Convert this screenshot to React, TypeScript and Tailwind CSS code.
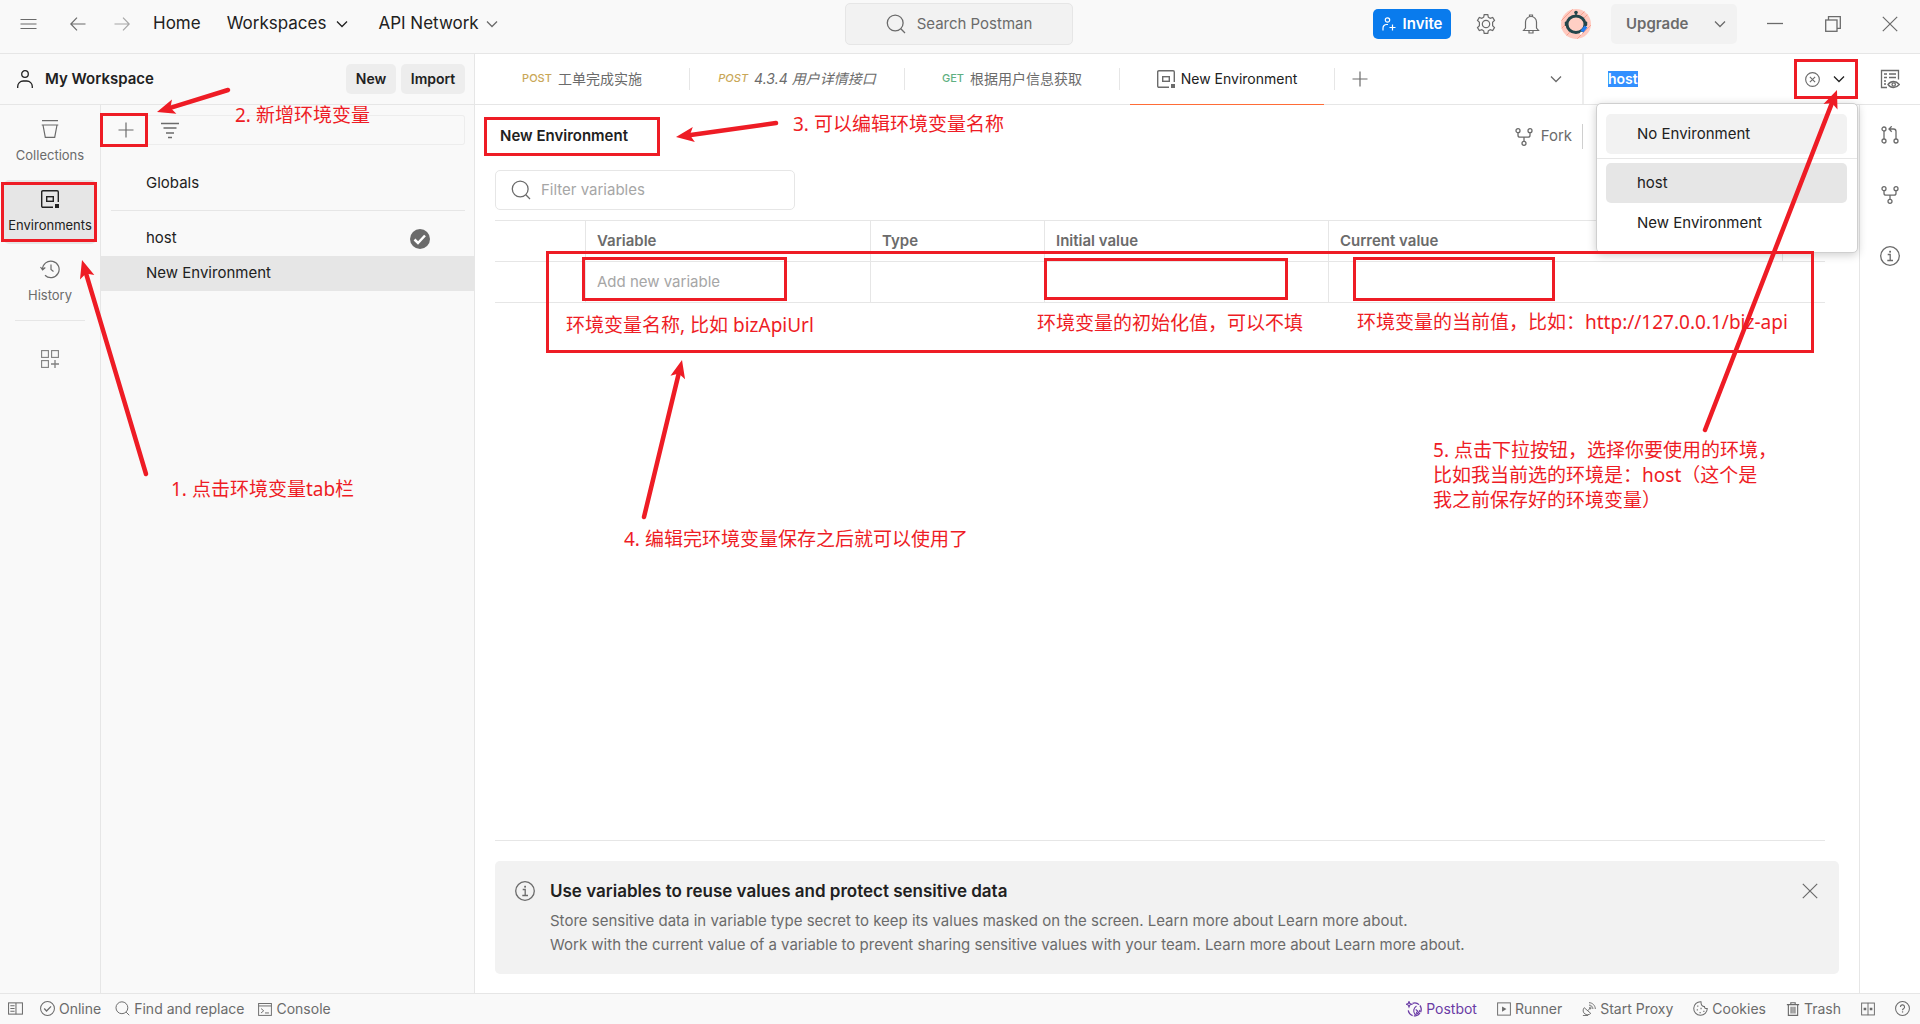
import React from "react";

type IconProps = { className?: string };

function Svg({ className = "size-4", box = 16, children }: { className?: string; box?: number; children: React.ReactNode }) {
  return (
    <svg
      viewBox={`0 0 ${box} ${box}`}
      className={`shrink-0 ${className}`}
      fill="none"
      stroke="currentColor"
      strokeWidth={1.1}
      aria-hidden="true"
    >
      {children}
    </svg>
  );
}

const Chevron = ({ className }: IconProps) => (
  <Svg className={className} box={12}>
    <path d="M1 3.5l5 5 5-5" strokeWidth={1.3} />
  </Svg>
);

const SearchIcon = ({ className }: IconProps) => (
  <Svg className={className} box={20}>
    <circle cx="9.2" cy="9" r="7.9" strokeWidth={1.3} />
    <path d="M14.8 14.8l4.2 4.2" strokeWidth={1.3} />
  </Svg>
);

const UserIcon = ({ className }: IconProps) => (
  <Svg className={className} box={18}>
    <circle cx="9" cy="4" r="3.3" strokeWidth={1.3} />
    <path d="M1.7 18v-1.5a5.5 5.5 0 0 1 5.5-5.5h3.6a5.5 5.5 0 0 1 5.5 5.5V18" strokeWidth={1.3} />
  </Svg>
);

const EnvIcon = ({ className }: IconProps) => (
  <Svg className={className} box={18}>
    <path d="M12 17.3H1.9a1.2 1.2 0 0 1-1.2-1.2V1.9A1.2 1.2 0 0 1 1.9.7h14.2a1.2 1.2 0 0 1 1.2 1.2V12" strokeWidth={1.4} />
    <rect x="5.7" y="6.7" width="6.6" height="4.6" strokeWidth={1.4} />
    <rect x="14" y="14" width="4" height="4" fill="currentColor" stroke="none" />
  </Svg>
);

const ForkIcon = ({ className }: IconProps) => (
  <Svg className={className} box={18}>
    <circle cx="3" cy="2.7" r="2" strokeWidth={1.3} />
    <circle cx="15" cy="2.7" r="2" strokeWidth={1.3} />
    <circle cx="9" cy="15.3" r="2" strokeWidth={1.3} />
    <path d="M3 4.7v2.5a2 2 0 0 0 2 2h8a2 2 0 0 0 2-2V4.7M9 9.2v4.100" strokeWidth={1.3} />
  </Svg>
);

const PullIcon = ({ className }: IconProps) => (
  <Svg className={className} box={18}>
    <circle cx="3" cy="3" r="2" strokeWidth={1.3} />
    <circle cx="3" cy="15" r="2" strokeWidth={1.3} />
    <circle cx="15" cy="15" r="2" strokeWidth={1.3} />
    <path d="M3 5v8M15 13V5.5a2.5 2.5 0 0 0-2.5-2.5H8M10.7.3L8 3l2.7 2.7" strokeWidth={1.3} />
  </Svg>
);

const InfoIcon = ({ className }: IconProps) => (
  <Svg className={className} box={20}>
    <circle cx="10" cy="10" r="9.3" strokeWidth={1.3} />
    <path d="M7.7 8.5h2.5v6M7.3 14.5h5.7" strokeWidth={1.3} />
    <rect x="9.2" y="4.8" width="1.8" height="1.8" fill="currentColor" stroke="none" />
  </Svg>
);

const PlusIcon = ({ className }: IconProps) => (
  <Svg className={className}>
    <path d="M8 .5v15M.5 8h15" strokeWidth={1.2} />
  </Svg>
);

const CloseIcon = ({ className }: IconProps) => (
  <Svg className={className}>
    <path d="M.8.8l14.4 14.4M15.2.8L.8 15.2" strokeWidth={1.2} />
  </Svg>
);

const CollectionIcon = () => (
  <Svg className="size-[18px]" box={18}>
    <path d="M1 .7h16M.7 5h16.6M2 5l2.3 12.3h9.4L16 5" strokeWidth={1.2} />
  </Svg>
);

const HistoryIcon = () => (
  <Svg className="size-5" box={20}>
    <path d="M2.5 10.5A8.3 8.3 0 1 1 5 16.3M.5 8l2.1 2.8L5.3 8.5" strokeWidth={1.2} />
    <path d="M11 5.5v5l2.5 2" strokeWidth={1.2} />
  </Svg>
);

const GridPlusIcon = () => (
  <Svg className="size-[18px]" box={18}>
    <rect x=".6" y=".6" width="6.8" height="6.8" />
    <rect x="10.6" y=".6" width="6.8" height="6.8" />
    <rect x=".6" y="10.6" width="6.8" height="6.8" />
    <path d="M14 10v8M10 14h8" strokeWidth={1.3} />
  </Svg>
);

const GearIcon = () => (
  <Svg className="size-5" box={20}>
    <path
      d="M8.2.7h3.6l.5 2.5 1.9 1.1 2.5-.9 1.8 3.1-1.900 1.700v3.600l1.900 1.700-1.800 3.100-2.500-.900-1.900 1.100-.500 2.500H8.200l-.500-2.500-1.900-1.100-2.500.900-1.800-3.100 1.900-1.700V8.200L1.500 6.500l1.800-3.100 2.500.900 1.900-1.100z"
      strokeWidth={1.2}
    />
    <circle cx="10" cy="10" r="3.7" strokeWidth={1.2} />
  </Svg>
);

const BellIcon = () => (
  <Svg className="size-5" box={20}>
    <path d="M2.500 16.500l2-2.500V8a5.500 5.500 0 0 1 11 0v6l2 2.500zM8.500 2.600V1h3v1.600M8 17v2h4v-2" strokeWidth={1.2} />
  </Svg>
);

const Avatar = () => (
  <svg viewBox="0 0 30 30" className="size-[30px] shrink-0" role="img" aria-label="Account">
    <defs>
      <clipPath id="avatar-clip">
        <circle cx="15" cy="15" r="15" />
      </clipPath>
    </defs>
    <g clipPath="url(#avatar-clip)">
      <rect width="30" height="30" fill="#ffc9bf" />
      <path d="M-2 14L14-2M0 20L8 12M4 28L28 4M16 30L30 16M20 6l6-6" stroke="#f7a08f" strokeWidth="1" />
      <ellipse cx="15" cy="15.3" rx="9" ry="8.3" fill="#ffcfc4" stroke="#23454b" strokeWidth="3" />
      <rect x="3.800" y="12.500" width="3.200" height="4.500" rx="1" fill="#23454b" />
      <rect x="23" y="12.500" width="3.200" height="4.500" rx="1" fill="#23454b" />
      <path d="M15 7V3.500" stroke="#23454b" strokeWidth="1.500" />
      <circle cx="15" cy="3.500" r="1.800" fill="#23454b" />
      <path d="M25 17.500l-4 5" stroke="#1f7cf0" strokeWidth="3.500" />
      <path d="M19.300 25.500l1.500-2.500" stroke="#fff" strokeWidth="2" />
    </g>
  </svg>
);

const RED = "#ee1c25";

/** Solid arrow with a swept head, drawn from (x1,y1) to the tip (x2,y2). */
function Arrow({ x1, y1, x2, y2, className }: { x1: number; y1: number; x2: number; y2: number; className: string }) {
  const pad = 14;
  const left = Math.min(x1, x2) - pad;
  const top = Math.min(y1, y2) - pad;
  const w = Math.abs(x2 - x1) + pad * 2;
  const h = Math.abs(y2 - y1) + pad * 2;
  const len = Math.hypot(x2 - x1, y2 - y1);
  const ux = (x2 - x1) / len;
  const uy = (y2 - y1) / len;
  const at = (along: number, side: number) => `${x2 - ux * along - uy * side},${y2 - uy * along + ux * side}`;
  return (
    <svg
      className={`pointer-events-none absolute z-30 ${className}`}
      width={w}
      height={h}
      viewBox={`${left} ${top} ${w} ${h}`}
      aria-hidden="true"
    >
      <line x1={x1} y1={y1} x2={x2 - ux * 13} y2={y2 - uy * 13} stroke={RED} strokeWidth={4.5} strokeLinecap="round" />
      <polygon points={`${x2},${y2} ${at(18, 7.5)} ${at(14, 0)} ${at(18, -7.5)}`} fill={RED} />
    </svg>
  );
}

function Box({ className }: { className: string }) {
  return <span className={`pointer-events-none absolute z-20 border-3 border-[#ee1c25] ${className}`} />;
}

function Note({ className, children }: { className: string; children: React.ReactNode }) {
  return (
    <p
      className={`pointer-events-none absolute z-20 text-[19px] leading-[25px] whitespace-nowrap text-[#ee1c25] [font-family:'Noto_Sans','Noto_Sans_CJK_SC',sans-serif] ${className}`}
    >
      {children}
    </p>
  );
}

function Header() {
  return (
    <header className="flex h-[54px] shrink-0 items-center border-b border-[#e6e6e6] bg-[#f9f9f9] pr-[22px] pb-[5px] pl-5">
      <div className="flex flex-1 items-center text-[#6b6b6b]">
        <button aria-label="Menu" className="mr-[33px]">
          <Svg className="h-4 w-[17px]">
            <path d="M0 3.5h16M0 8h16M0 12.5h16" strokeWidth={1.2} />
          </Svg>
        </button>
        <button aria-label="Back" className="mr-7">
          <Svg>
            <path d="M15.5 8H1M7 1.7L.8 8 7 14.3" strokeWidth={1.2} />
          </Svg>
        </button>
        <button aria-label="Forward" className="mr-[23px] text-[#a6a6a6]">
          <Svg>
            <path d="M.5 8H15M9 1.7L15.2 8 9 14.3" strokeWidth={1.2} />
          </Svg>
        </button>
        <nav className="flex items-center text-[17px] text-[#212121]">
          <a href="#home" className="mr-[26px]">Home</a>
          <button className="mr-[30px] flex items-center gap-2.5">
            Workspaces <Chevron className="size-3" />
          </button>
          <button className="flex items-center gap-[7px]">
            API Network <Chevron className="size-3 text-[#6b6b6b]" />
          </button>
        </nav>
      </div>
      <button className="flex h-[42px] w-[228px] items-center justify-center gap-[11px] rounded-[5px] border border-[#e6e6e6] bg-[#f2f2f2] text-[15px] text-[#6b6b6b]">
        <SearchIcon className="size-5" /> Search Postman
      </button>
      <div className="flex flex-1 items-center justify-end text-[#6b6b6b]">
        <button className="mr-[25px] flex h-[30px] w-[78px] items-center justify-center gap-[7px] rounded-[5px] bg-[#097bed] text-[15px] font-semibold text-white">
          <Svg className="size-3.5" box={14}>
            <circle cx="5.5" cy="3" r="2.2" strokeWidth={1.2} />
            <path d="M1 13.5V11a3.5 3.5 0 0 1 3.5-3.5H6M10.5 7.5v6M7.5 10.5h6" strokeWidth={1.2} />
          </Svg>
          Invite
        </button>
        <button aria-label="Settings" className="mr-[25px]"><GearIcon /></button>
        <button aria-label="Notifications" className="mr-5"><BellIcon /></button>
        <Avatar />
        <button className="mr-[30px] ml-5 flex h-10 w-[126px] items-center justify-between rounded-[5px] bg-[#f2f2f2] pr-[11px] pl-[15px] text-[15px] font-semibold">
          Upgrade <Chevron className="size-3" />
        </button>
        <button aria-label="Minimize" className="mr-[42px]">
          <Svg><path d="M0 7.5h16" strokeWidth={1.3} /></Svg>
        </button>
        <button aria-label="Restore" className="mr-[41px]">
          <Svg>
            <rect x=".7" y="4" width="11.3" height="11.3" strokeWidth={1.3} />
            <path d="M3.500 4V.700h11.800V12.300H12" strokeWidth={1.3} />
          </Svg>
        </button>
        <button aria-label="Close"><CloseIcon /></button>
      </div>
    </header>
  );
}

function RailButton({ label, active, icon, children }: { label: string; active?: boolean; icon: React.ReactNode; children?: React.ReactNode }) {
  return (
    <button
      className={`relative flex h-16 w-full flex-col items-center justify-between rounded-[5px] py-2.5 text-[13px] leading-[18px] ${
        active ? "bg-[#e6e6e6] text-[#212121]" : "text-[#6b6b6b]"
      }`}
    >
      <span className="flex h-[18px] items-center">{icon}</span>
      {label}
      {children}
    </button>
  );
}

function Sidebar() {
  return (
    <aside className="relative flex w-[475px] shrink-0 flex-col border-r border-[#e6e6e6] bg-[#f9f9f9]">
      <div className="flex h-[51px] shrink-0 items-center border-b border-[#e6e6e6] pr-[9px] pl-4 text-[15px] font-semibold text-[#212121]">
        <UserIcon className="size-[18px]" />
        <h2 className="flex-1 pl-[11px]">My Workspace</h2>
        <button className="h-[30px] w-[50px] rounded-[5px] bg-[#ededed] text-sm">New</button>
        <button className="ml-[5px] h-[30px] w-16 rounded-[5px] bg-[#ededed] text-sm">Import</button>
      </div>
      <div className="flex min-h-0 flex-1">
        <nav className="flex w-[101px] shrink-0 flex-col gap-1.5 border-r border-[#e6e6e6] px-1 pt-[5px]">
          <RailButton label="Collections" icon={<CollectionIcon />} />
          <RailButton label="Environments" active icon={<EnvIcon className="size-[18px]" />}>
            <Box className="inset-y-0.5 -right-px -left-[3px]" />
          </RailButton>
          <RailButton label="History" icon={<HistoryIcon />} />
          <hr className="mx-[11px] border-[#e6e6e6]" />
          <button aria-label="Configure sidebar" className="mt-[23px] flex justify-center text-[#808080]">
            <GridPlusIcon />
          </button>
        </nav>
        <div className="flex flex-1 flex-col pt-2.5 text-[15px] text-[#212121]">
          <div className="flex h-[30px] pr-[9px] text-[#6b6b6b]">
            <button aria-label="New environment" className="relative flex w-[47px] items-center justify-center pl-[3px]">
              <PlusIcon className="size-4" />
              <Box className="-inset-y-0.5 right-0 -left-px" />
            </button>
            <label className="flex flex-1 items-center rounded-r-[3px] border border-l-0 border-[#ededed] pl-[13px]">
              <Svg className="size-[18px]" box={18}>
                <path d="M0 2.500h18M2.500 7h13M5 12h8M7 16.500h4" strokeWidth={1.3} />
              </Svg>
              <input aria-label="Filter environments" className="min-w-0 flex-1 bg-transparent px-2 outline-none" />
            </label>
          </div>
          <a href="#globals" className="mt-[21px] flex h-[35px] items-center pl-[45px]">Globals</a>
          <hr className="mt-[9px] mr-[9px] mb-2.5 ml-2.5 border-[#e6e6e6]" />
          <a href="#host" className="flex h-[35px] items-center justify-between pr-11 pl-[45px]">
            host
            <svg viewBox="0 0 20 20" className="size-5" aria-label="Active" role="img">
              <circle cx="10" cy="10" r="10" fill="#6b6b6b" />
              <path d="M4.500 10.500l3.500 3.500 7-7.500" fill="none" stroke="#fff" strokeWidth="2.500" />
            </svg>
          </a>
          <a href="#new-environment" className="flex h-[35px] items-center bg-[#e6e6e6] pl-[45px]">New Environment</a>
        </div>
      </div>
      <Note className="top-[49px] left-[235px]">2. 新增环境变量</Note>
      <Arrow x1={228} y1={90} x2={157} y2={112} className="top-[22px] left-[143px]" />
      <Note className="top-[423px] left-[171px]">1. 点击环境变量tab栏</Note>
      <Arrow x1={146} y1={474} x2={82} y2={260} className="top-[192px] left-[68px]" />
    </aside>
  );
}

function Tab({ method, tone = "", title, italic }: { method: string; tone?: string; title: string; italic?: boolean }) {
  return (
    <button
      className={`flex h-[22px] w-[215px] items-center justify-center gap-1.5 border-r border-[#e6e6e6] text-sm text-[#6b6b6b] ${italic ? "italic" : ""}`}
    >
      <span className={`text-[11px] font-medium ${tone}`}>{method}</span>
      {title}
    </button>
  );
}

function EnvironmentMenu() {
  const item = "flex h-10 w-full items-center rounded-[5px] pl-[31px] text-left";
  return (
    <div className="absolute top-[49px] right-px z-10 w-[262px] rounded-[5px] border border-[#cfcfcf] bg-white pt-2.5 pb-[9px] text-[15px] text-[#212121] shadow-[0_2px_10px_rgba(0,0,0,0.2)]">
      <ul>
        <li className="border-b border-[#e6e6e6] pr-2.5 pb-1 pl-[9px]"><button className={`${item} bg-[#f2f2f2]`}>No Environment</button></li>
        <li className="pt-1 pr-2.5 pl-[9px]"><button className={`${item} bg-[#e6e6e6]`}>host</button></li>
        <li className="pr-2.5 pl-[9px]"><button className={item}>New Environment</button></li>
      </ul>
    </div>
  );
}

function TabBar() {
  return (
    <div className="flex h-[51px] shrink-0 items-center border-b border-[#e6e6e6]">
      <div className="flex h-full flex-1 items-center">
        <Tab method="POST" tone="text-[#c9a757]" title="工单完成实施" />
        <Tab method="POST" tone="text-[#c9a757]" title="4.3.4 用户详情接口" italic />
        <Tab method="GET" tone="text-[#5fb082]" title="根据用户信息获取" />
        <div className="relative flex h-[22px] w-[215px] items-center justify-center border-r border-[#e6e6e6]">
          <button className="flex items-center gap-1.5 text-sm text-[#212121]">
            <EnvIcon className="size-[18px] text-[#6b6b6b]" /> New Environment
          </button>
          <span className="absolute inset-x-2.5 -bottom-[15px] h-px bg-[#ff6c37]" />
        </div>
        <button aria-label="New tab" className="ml-[17px] text-[#6b6b6b]"><PlusIcon className="size-4" /></button>
        <button aria-label="All tabs" className="mr-5 ml-auto text-[#6b6b6b]"><Chevron className="size-3" /></button>
      </div>
      <div className="relative flex h-full w-[277px] items-center border-l-2 border-[#ededed] pl-6">
        <input
          aria-label="Environment"
          defaultValue="host"
          className="field-sizing-content h-4 bg-[#3390ff] text-sm leading-4 font-semibold text-white outline-none"
        />
        <div className="relative mr-px ml-auto flex h-10 w-16 items-center pl-[11px]">
          <button aria-label="Clear environment" className="text-[#6b6b6b]">
            <Svg className="size-[15px]">
              <circle cx="8" cy="8" r="7.3" strokeWidth={1.2} />
              <path d="M5.2 5.2l5.6 5.6M10.8 5.2l-5.6 5.6" strokeWidth={1.2} />
            </Svg>
          </button>
          <button aria-label="Choose environment" className="ml-[13px] text-[#212121]"><Chevron className="size-3" /></button>
          <Box className="inset-0" />
        </div>
        <EnvironmentMenu />
      </div>
      <button aria-label="Environment quick look" className="flex w-[61px] justify-center text-[#6b6b6b]">
        <Svg className="size-5" box={20}>
          <path d="M7 18.500H1.500v-17h17v9" strokeWidth={1.3} />
          <path d="M4 5h3M9 5h7M4 8.500h3M9 8.500h7M4 12h2M4 15h2" strokeWidth={1.3} />
          <path d="M8 15.500c3-4 8-4 11.300 0-3.300 4-8.300 4-11.300 0z" strokeWidth={1.3} />
          <circle cx="13.700" cy="15.500" r="1.700" strokeWidth={1.3} />
        </Svg>
      </button>
    </div>
  );
}

function VariablesTable() {
  const th = "border-r border-[#e6e6e6] pl-[11px] text-left font-semibold";
  const td = "relative border-r border-[#e6e6e6]";
  return (
    <div className="relative mt-2.5 mr-3.5">
      <table className="w-full table-fixed border-separate border-spacing-0 text-[15px] text-[#6b6b6b]">
        <colgroup>
          <col className="w-[91px]" />
          <col className="w-[285px]" />
          <col className="w-[174px]" />
          <col className="w-[284px]" />
          <col />
          <col className="w-[42px]" />
        </colgroup>
        <thead>
          <tr className="h-[41px] *:border-t *:border-[#e6e6e6]">
            <td className="border-r" />
            <th scope="col" className={th}>Variable</th>
            <th scope="col" className={th}>Type</th>
            <th scope="col" className={th}>Initial value</th>
            <th scope="col" className={th}>Current value</th>
            <td />
          </tr>
        </thead>
        <tbody>
          <tr className="h-[42px] *:border-y *:border-[#e6e6e6]">
            <td className="border-r" />
            <td className={td}>
              <input
                aria-label="Variable name"
                placeholder="Add new variable"
                className="w-full bg-transparent pl-[11px] outline-none placeholder:text-[#a6a6a6]"
              />
              <Box className="-top-[5px] -left-1 h-11 w-[205px]" />
            </td>
            <td className={td} />
            <td className={td}>
              <Box className="-top-1 -left-px h-[42px] w-[244px]" />
              <input aria-label="Initial value" className="w-full bg-transparent pl-3 outline-none" />
            </td>
            <td>
              <input aria-label="Current value" className="w-full bg-transparent pl-3 outline-none" />
            </td>
            <td />
          </tr>
        </tbody>
      </table>
      <Box className="top-[37px] left-[858px] h-11 w-[202px]" />
      <Box className="top-[31px] right-[11px] left-[51px] h-[102px]" />
      <Note className="top-[93px] left-[71px]">环境变量名称, 比如 bizApiUrl</Note>
      <Note className="top-[91px] left-[542px]">环境变量的初始化值，可以不填</Note>
      <Note className="top-[90px] left-[862px]">环境变量的当前值，比如：http://127.0.0.1/biz-api</Note>
    </div>
  );
}

function Editor() {
  return (
    <main className="relative flex min-w-0 flex-1 flex-col px-5 pb-[19px] text-[#6b6b6b]">
      <div className="flex h-[63px] items-center">
        <div className="relative -ml-[11px] flex h-[39px] w-[176px] items-center pl-4">
          <h1 className="text-[15px] font-semibold text-[#212121]">New Environment</h1>
          <Box className="inset-0" />
        </div>
        <button className="ml-auto flex h-[25px] items-center gap-2 border-r border-[#cfcfcf] pr-2.5 text-[15px]">
          <ForkIcon className="size-[18px]" /> Fork
        </button>
        <div className="w-64" />
      </div>
      <label className="mt-0.5 flex h-10 w-[300px] items-center gap-2.5 rounded-[5px] border border-[#e6e6e6] pl-[15px]">
        <SearchIcon className="size-5" />
        <input
          aria-label="Filter variables"
          placeholder="Filter variables"
          className="min-w-0 flex-1 text-[15px] outline-none placeholder:text-[#a6a6a6]"
        />
      </label>
      <VariablesTable />
      <div className="mr-3.5 flex-1 border-b border-[#e6e6e6]" />
      <section className="mt-5 flex h-[113px] items-start rounded-[5px] bg-[#f2f2f2] px-5 pt-[17px]">
        <InfoIcon className="mt-[3px] size-5" />
        <div className="flex-1 pl-[15px] text-[15px] leading-6">
          <h2 className="mb-[5px] text-[17px] leading-[26px] font-semibold text-[#212121]">
            Use variables to reuse values and protect sensitive data
          </h2>
          <p>Store sensitive data in variable type secret to keep its values masked on the screen. Learn more about Learn more about.</p>
          <p>Work with the current value of a variable to prevent sharing sensitive values with your team. Learn more about Learn more about.</p>
        </div>
        <button aria-label="Dismiss" className="mt-[5px] mr-px"><CloseIcon className="size-4" /></button>
      </section>

      <Note className="top-[7px] left-[318px]">3. 可以编辑环境变量名称</Note>
      <Arrow x1={776} y1={123} x2={676} y2={137} className="top-1 left-[187px]" />
      <Note className="top-[422px] left-[149px]">4. 编辑完环境变量保存之后就可以使用了</Note>
      <Arrow x1={644} y1={517} x2={682} y2={360} className="top-[241px] left-[155px]" />
      <Arrow x1={1705} y1={430} x2={1837} y2={90} className="-top-[29px] right-2" />
      <Note className="top-[333px] right-[82px]">
        5. 点击下拉按钮，选择你要使用的环境，
        <br />
        比如我当前选的环境是：host（这个是
        <br />
        我之前保存好的环境变量）
      </Note>
    </main>
  );
}

function Footer() {
  const item = "flex items-center gap-1";
  return (
    <footer className="flex h-[31px] shrink-0 items-center justify-between border-t border-[#e6e6e6] bg-[#f9f9f9] pr-2.5 pb-px pl-2 text-sm text-[#6b6b6b]">
      <div className="flex items-center">
        <button aria-label="Toggle sidebar" className="mr-[17px]">
          <Svg className="size-[15px]">
            <rect x=".6" y="2" width="14.8" height="12" />
            <path d="M8.500 2v12M2.500 5H7M2.500 8H7M2.500 11H7" />
          </Svg>
        </button>
        <button className={`${item} mr-3.5`}>
          <Svg className="size-[15px]">
            <circle cx="8" cy="8" r="7.4" />
            <path d="M4.500 8l2.500 2.700 4.800-5" strokeWidth={1.3} />
          </Svg>
          Online
        </button>
        <button className={`${item} mr-3.5`}><SearchIcon className="size-[15px]" /> Find and replace</button>
        <button className={item}>
          <Svg className="size-3.5">
            <rect x=".7" y="1.7" width="14.6" height="13.6" />
            <path d="M.700 4.500h14.600M3.500 7.500l3 2.500-3 2.500M8 12.500h4.500" />
          </Svg>
          Console
        </button>
      </div>
      <div className="flex items-center gap-5">
        <button className={`${item} text-[#6a3ba5]`}>
          <Svg className="size-4">
            <path d="M6.500 2.300A6.500 6.500 0 1 1 2.200 8.500" strokeWidth={1.3} strokeDasharray="7 1.200" />
            <path d="M3 .500l.800 2 2 .800-2 .800L3 6l-.800-1.900-2-.800 2-.800z" />
            <path d="M10.500 5C7.500 7 6.800 10.500 9 13.500c2.500-.500 4.300-2 5-4.500M9.700 8.500l2 1.500-1.500 2" />
          </Svg>
          Postbot
        </button>
        <button className={item}>
          <Svg className="size-3.5">
            <rect x=".7" y="1" width="14.6" height="14" />
            <path d="M5.800 5v6l5-3z" fill="currentColor" stroke="none" />
          </Svg>
          Runner
        </button>
        <button className={item}>
          <Svg className="size-3.5">
            <path d="M2.500 6.500c-2.500 3-1 8 4 8 1.500 0 2.700-.500 3.500-1.500zM6.500 10l3-3M1 15.500h6" />
            <path d="M8 3.500c2.500 0 4.500 2 4.500 4.500M8 .800c4 0 7.200 3.200 7.200 7.200" />
            <circle cx="9.500" cy="6.800" r="1" />
          </Svg>
          Start Proxy
        </button>
        <button className={item}>
          <Svg className="size-[15px]">
            <path d="M8.500.800A7.200 7.200 0 1 0 15.200 8c-1.700.300-3-.500-3-2-2 0-3.700-1.500-3.700-5.200z" />
            <path d="M4.500 5.500h1.200M4 9.500h1.200M8 8h1.200M7 12.300h1.200M11 11h1.200" strokeWidth={1.4} />
          </Svg>
          Cookies
        </button>
        <button className={item}>
          <Svg className="size-3.5">
            <path d="M1 3h14M5.500 2.500V.800h5v1.700M2.700 3v12.300h10.600V3M5.800 5.500v7.500M8 5.500v7.500M10.200 5.500v7.500" strokeWidth={1.3} />
          </Svg>
          Trash
        </button>
        <button aria-label="Two pane view">
          <Svg className="size-3.5">
            <rect x=".7" y="1.2" width="14.6" height="13.6" />
            <path d="M8 1v14" />
            <path d="M3 6.500h3v3H3zM10 6.500h3v3h-3z" fill="currentColor" stroke="none" />
          </Svg>
        </button>
        <button aria-label="Help">
          <Svg className="size-[15px]">
            <circle cx="8" cy="8" r="7.4" />
            <path d="M5.800 6.300a2.200 2.200 0 1 1 3.300 1.900c-.700.400-1.100.800-1.100 1.600" strokeWidth={1.2} />
            <rect x="7.400" y="11" width="1.300" height="1.300" fill="currentColor" stroke="none" />
          </Svg>
        </button>
      </div>
    </footer>
  );
}

export default function App() {
  return (
    <div className="flex min-h-screen flex-col overflow-hidden bg-white [font-family:Inter,'Noto_Sans_CJK_SC',sans-serif]">
      <Header />
      <div className="flex flex-1">
        <Sidebar />
        <div className="flex min-w-0 flex-1 flex-col">
          <TabBar />
          <div className="flex flex-1">
            <Editor />
            <aside className="flex w-[61px] shrink-0 flex-col items-center gap-[42px] border-l border-[#e6e6e6] pt-[21px] text-[#6b6b6b]">
              <button aria-label="Pull requests"><PullIcon className="size-[18px]" /></button>
              <button aria-label="Forks"><ForkIcon className="size-[18px]" /></button>
              <button aria-label="Info"><InfoIcon className="size-5" /></button>
            </aside>
          </div>
        </div>
      </div>
      <Footer />
    </div>
  );
}
